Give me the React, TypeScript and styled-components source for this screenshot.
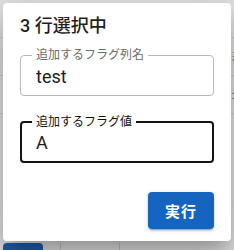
import React, { useState } from 'react';
import styled, { createGlobalStyle } from 'styled-components';

const GlobalStyle = createGlobalStyle`
    html, body {
        margin: 0;
        padding: 0;
        background: #e2e2e2;
        font-family: Roboto, "Noto Sans CJK JP", sans-serif;
    }
    * {
        box-sizing: border-box;
    }
`;

const Page = styled.div`
    position: relative;
    width: 234px;
    height: 250px;
    overflow: hidden;
    display: flex;
    flex-direction: column;
    background: #e2e2e2;
`;

const TopBand = styled.div`
    height: 38px;
    border-bottom: 1px solid #cfcfcf;
`;

const Row = styled.div`
    height: 38px;
    display: flex;
    align-items: center;
    padding-left: 232px;
    border-bottom: 1px solid #cfcfcf;
    font-size: 13px;
    color: #555;
    white-space: nowrap;
`;

const Spacer = styled.div`
    flex: 1;
`;

const Footer = styled.div`
    height: 7px;
    display: flex;
    padding-left: 3px;
`;

const FooterButton = styled.div`
    width: 40px;
    height: 20px;
    background: #1d5fae;
    border-radius: 4px;
`;

const FooterCell = styled.div<{ $width: number }>`
    width: ${(p) => p.$width}px;
    border-right: 1px solid #c4c4c4;
`;

const Dialog = styled.div`
    position: absolute;
    top: 3px;
    left: 3px;
    width: 228px;
    height: 238px;
    background: #ffffff;
    border-radius: 4px;
    box-shadow: 0 11px 15px -7px rgba(0, 0, 0, 0.2), 0 24px 38px 3px rgba(0, 0, 0, 0.14),
        0 9px 46px 8px rgba(0, 0, 0, 0.12);
    display: flex;
    flex-direction: column;
    padding: 9px 17px 12px 17px;
`;

const Title = styled.h2`
    margin: 0;
    font-size: 18px;
    font-weight: 500;
    line-height: 28px;
    color: #1f1f1f;
`;

const Fields = styled.div`
    display: flex;
    flex-direction: column;
    gap: 19px;
    margin-top: 8px;
`;

const Field = styled.fieldset<{ $focused?: boolean }>`
    margin: 0;
    min-width: 0;
    border-radius: 4px;
    border: ${(p) => (p.$focused ? '2px solid #141414' : '1px solid #b9b9b9')};
    padding: ${(p) => (p.$focused ? '1px 11px 7px 10px' : '2px 12px 7px 11px')};
`;

const Legend = styled.legend<{ $focused?: boolean }>`
    padding: 0 4px;
    font-size: 12px;
    line-height: 14px;
    color: ${(p) => (p.$focused ? '#111' : '#6b6b6b')};
    white-space: nowrap;
`;

const Input = styled.input`
    display: block;
    width: 100%;
    height: 24px;
    border: none;
    outline: none;
    padding: 0 0 0 4px;
    margin: 0;
    font-family: Roboto, "Noto Sans CJK JP", sans-serif;
    font-size: 18px;
    color: #1c1c1c;
    background: transparent;
`;

const Actions = styled.div`
    margin-top: auto;
    display: flex;
    justify-content: flex-end;
`;

const SubmitButton = styled.button`
    width: 66px;
    height: 37px;
    border: none;
    border-radius: 4px;
    background: #1565c0;
    color: #ffffff;
    font-family: Roboto, "Noto Sans CJK JP", sans-serif;
    font-size: 15px;
    font-weight: 700;
    letter-spacing: 1px;
    cursor: pointer;
    box-shadow: 0 3px 1px -2px rgba(0, 0, 0, 0.2), 0 2px 2px 0 rgba(0, 0, 0, 0.14),
        0 1px 5px 0 rgba(0, 0, 0, 0.12);
`;

const App: React.FC = () => {
    const [name, setName] = useState('test');
    const [value, setValue] = useState('A');

    return (
        <>
            <GlobalStyle />
            <Page>
                <TopBand />
                <Row>表示</Row>
                <Row>名前</Row>
                <Spacer />
                <Footer>
                    <FooterButton />
                    <FooterCell $width={18} />
                    <FooterCell $width={59} />
                </Footer>
                <Dialog role="dialog">
                    <Title>3 行選択中</Title>
                    <Fields>
                        <Field>
                            <Legend>追加するフラグ列名</Legend>
                            <Input value={name} onChange={(e) => setName(e.target.value)} />
                        </Field>
                        <Field $focused>
                            <Legend $focused>追加するフラグ値</Legend>
                            <Input value={value} onChange={(e) => setValue(e.target.value)} />
                        </Field>
                    </Fields>
                    <Actions>
                        <SubmitButton>実行</SubmitButton>
                    </Actions>
                </Dialog>
            </Page>
        </>
    );
};

export default App;
